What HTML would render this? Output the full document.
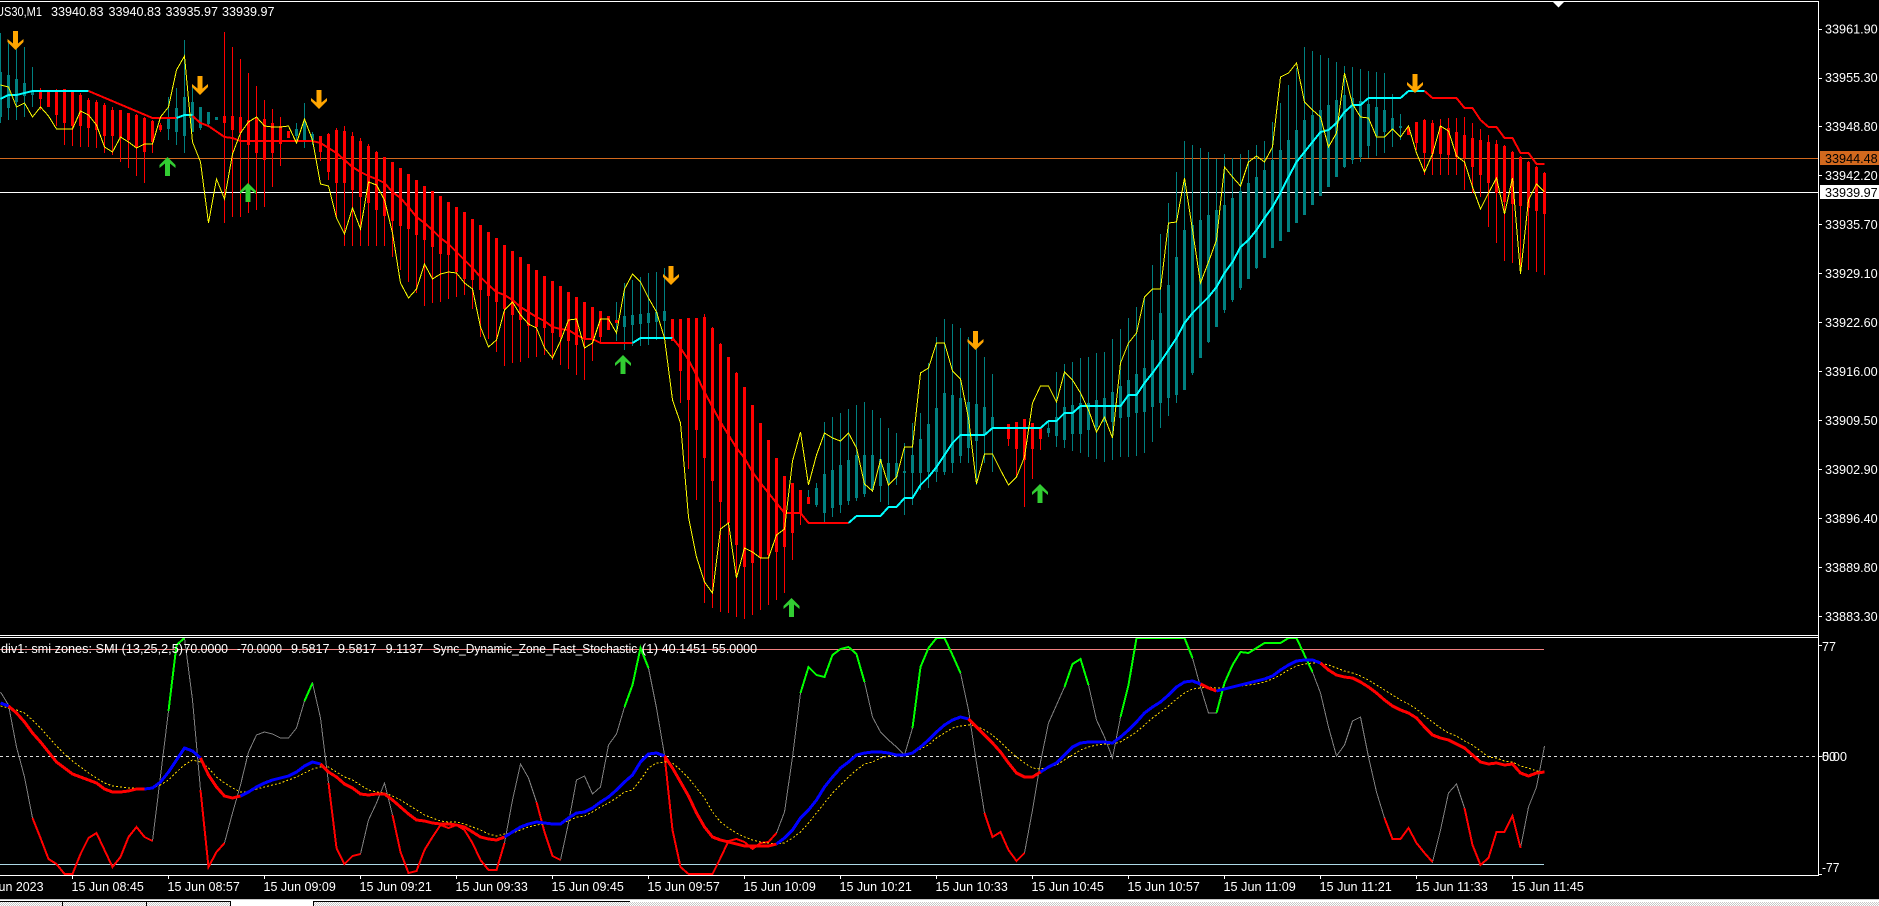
<!DOCTYPE html>
<html><head><meta charset="utf-8"><title>US30,M1</title>
<style>
html,body{margin:0;padding:0;background:#000;width:1879px;height:906px;overflow:hidden}
svg{display:block}
text{font-family:"Liberation Sans",sans-serif;font-size:12.5px;fill:#fff}
.c{shape-rendering:crispEdges;fill:none}
</style></head><body>
<svg width="1879" height="906" viewBox="0 0 1879 906" xmlns="http://www.w3.org/2000/svg">
<defs>
<clipPath id="m"><rect x="0" y="2" width="1818" height="633"/></clipPath>
<clipPath id="s"><rect x="0" y="638" width="1818" height="237"/></clipPath>
<pattern id="d" width="2" height="2" patternUnits="userSpaceOnUse"><rect width="2" height="2" fill="#fff"/><rect width="1" height="1" fill="#c8c8c8"/><rect x="1" y="1" width="1" height="1" fill="#c8c8c8"/></pattern>
<polygon id="up" points="0,0 8,8 8,11 2.5,6.5 2.5,19 -2.5,19 -2.5,6.5 -8,11 -8,8"/>
</defs>
<rect width="1879" height="906" fill="#000"/>

<g clip-path="url(#m)">
<path class="c" d="M0 158.5H1818" stroke="#d2691e"/>
<path class="c" d="M0 192.5H1818" stroke="#fff"/>
<g transform="translate(.5 0)">
<path class="c" stroke="#008080" stroke-width="1" d="M0 33V123M8 43V120M16 47V120M24 47V117M32 67V107M168 97V140M176 88V145M184 40V153M192 85V132M200 107V130M208 112V127M216 117V120M296 123V143M304 103V148M312 132V145M616 302V341M624 283V350M632 280V346M640 277V346M648 273V345M656 272V340M664 268V340M808 490V504M816 483V507M824 422V523M832 417V517M840 413V513M848 409V505M856 405V501M864 402V497M872 410V492M880 418V502M888 428V505M896 433V485M904 443V515M912 423V505M920 413V490M928 363V488M936 337V482M944 319V475M952 324V473M960 328V463M968 337V463M976 347V485M984 357V463M992 374V472M1048 422V437M1056 372V447M1064 364V448M1072 362V451M1080 358V453M1088 357V457M1096 353V459M1104 352V462M1112 339V460M1120 329V457M1128 318V457M1136 307V456M1144 297V453M1152 265V442M1160 234V428M1168 203V416M1176 172V403M1184 141V390M1192 145V375M1200 148V358M1208 152V343M1216 159V327M1224 154V313M1232 158V302M1240 154V290M1248 150V279M1256 145V269M1264 141V258M1272 122V248M1280 103V241M1288 85V232M1296 68V223M1304 47V215M1312 51V205M1320 55V196M1328 58V187M1336 62V177M1344 66V168M1352 67V164M1360 69V162M1368 71V158M1376 72V156M1384 73V153M1392 94V147M1400 114V140"/>
<path class="c" stroke="#008080" stroke-width="3" d="M0 72V117M8 75V108M16 79V102M24 83V96M32 91V95M168 117V129M176 108V132M184 97V136M192 102V132M200 107V128M208 112V124M216 117V120M296 129V136M304 121V140M312 134V140M624 316V327M632 315V325M640 314V324M648 313V323M656 312V322M664 311V321M816 488V505M824 474V513M832 470V508M840 465V505M848 460V501M856 455V498M864 455V494M872 455V490M880 459V486M888 463V483M896 463V477M904 471V473M912 455V473M920 439V473M928 424V472M936 408V472M944 393V472M952 395V463M960 398V456M968 402V448M976 404V441M984 407V435M992 417V428M1048 428V433M1056 417V436M1064 407V440M1072 405V434M1080 403V434M1088 403V430M1096 400V427M1104 398V422M1112 392V422M1120 386V418M1128 380V417M1136 374V413M1144 368V412M1152 340V407M1160 313V403M1168 285V398M1176 257V395M1184 230V390M1192 225V373M1200 220V358M1208 215V342M1216 210V327M1224 205V310M1232 198V300M1240 191V288M1248 183V279M1256 177V268M1264 170V258M1272 160V248M1280 150V241M1288 140V232M1296 130V223M1304 120V215M1312 115V205M1320 110V196M1328 105V187M1336 100V177M1344 95V167M1352 98V160M1360 101V157M1368 104V146M1376 107V136M1384 110V132M1392 118V130M1400 126V128"/>
<path class="c" stroke="#f00" stroke-width="1" d="M40 88V110M48 91V107M56 89V126M64 89V145M72 91V146M80 93V147M88 98V147M96 100V148M104 103V153M112 107V155M120 110V162M128 113V168M136 114V176M144 117V183M152 120V153M160 123V132M224 32V223M232 47V217M240 59V217M248 73V213M256 86V210M264 100V207M272 109V187M280 117V166M288 131V138M320 136V161M328 133V180M336 128V217M344 126V246M352 132V246M360 138V246M368 144V246M376 151V246M384 157V246M392 162V257M400 168V270M408 174V282M416 180V293M424 186V306M432 191V303M440 196V302M448 202V299M456 207V297M464 212V295M472 219V309M480 225V337M488 232V339M496 238V352M504 245V366M512 251V363M520 257V362M528 264V358M536 270V357M544 276V355M552 281V360M560 286V365M568 292V369M576 297V375M584 302V380M592 307V361M600 311V342M608 316V330M672 319V341M680 319V403M688 318V469M696 318V500M704 314V603M712 327V608M720 343V612M728 357V613M736 372V617M744 387V619M752 405V615M760 423V610M768 440V605M776 458V600M784 476V593M792 483V560M800 490V525M1008 424V446M1016 422V477M1024 419V507M1032 423V479M1040 427V450M1408 127V135M1416 122V150M1424 119V175M1432 120V175M1440 119V175M1448 118V175M1456 118V175M1464 117V190M1472 123V193M1480 129V197M1488 135V227M1496 140V243M1504 145V261M1512 151V263M1520 156V273M1528 161V270M1536 166V272M1544 172V275"/>
<path class="c" stroke="#f00" stroke-width="3" d="M40 92V99M48 91V107M56 91V115M64 89V123M72 92V126M80 95V126M88 100V128M96 102V130M104 105V136M112 110V136M120 110V138M128 113V140M136 115V147M144 118V152M152 121V142M160 125V130M224 116V123M232 116V130M240 117V133M248 120V145M256 118V153M264 119V160M272 123V153M280 126V144M288 131V138M320 136V152M328 134V172M336 130V183M344 131V183M352 136V190M360 141V197M368 146V203M376 152V210M384 157V216M392 162V221M400 168V226M408 174V229M416 180V235M424 186V240M432 191V247M440 196V254M448 202V255M456 207V272M464 212V279M472 219V280M480 225V290M488 232V296M496 238V302M504 245V309M512 251V315M520 257V320M528 264V326M536 270V327M544 276V328M552 281V333M560 286V337M568 292V341M576 297V345M584 302V338M592 307V338M600 311V337M608 316V330M616 320V323M672 319V341M680 319V371M688 318V400M696 318V430M704 317V458M712 328V481M720 344V502M728 357V523M736 373V545M744 387V567M752 405V563M760 423V558M768 440V555M776 458V552M784 476V547M792 483V533M800 490V514M808 497V504M1000 427V429M1008 424V439M1016 422V449M1024 419V460M1032 423V449M1040 427V439M1408 127V135M1416 122V143M1424 120V153M1432 123V154M1440 126V154M1448 128V155M1456 132V157M1464 135V158M1472 138V167M1480 140V175M1488 142V183M1496 144V193M1504 146V202M1512 152V204M1520 157V206M1528 162V208M1536 167V211M1544 173V214"/>
<!-- MA -->
<g stroke-width="2" class="c">
<polyline stroke="#0ff" points="0,99 8,95 16,95 24,93 32,91 88,91"/>
<polyline stroke="#f00" points="88,91 152,118 176,118"/>
<polyline stroke="#0ff" points="176,118 184,115 192,115"/>
<polyline stroke="#f00" points="192,116 200,123 208,126 224,137 232,138 240,141 312,141 320,143 328,148 336,153 344,160 352,167 360,172 368,176 376,179 384,183 392,192 400,198 408,207 416,217 424,223 432,230 440,238 448,244 456,252 464,260 472,268 480,277 488,285 496,292 504,295 512,300 520,307 528,312 536,317 544,321 552,327 560,329 568,330 576,335 584,339 592,339 600,343 632,343"/>
<polyline stroke="#0ff" points="632,343 640,338 672,338"/>
<polyline stroke="#f00" points="672,338 680,348 688,360 696,375 704,392 712,407 720,422 728,435 736,448 744,458 752,472 760,483 768,493 776,503 784,513 800,513 808,523 848,523"/>
<polyline stroke="#0ff" points="848,523 856,516 880,516 888,507 896,507 904,498 912,498 920,485 928,477 936,467 944,455 952,443 960,435 984,435 992,428 1040,428 1048,421 1056,421 1064,413 1072,413 1080,406 1120,406 1128,395 1136,395 1144,383 1152,373 1160,362 1168,350 1176,338 1184,323 1192,313 1200,305 1208,297 1216,287 1224,273 1232,262 1240,247 1248,240 1256,230 1264,218 1272,207 1280,193 1288,177 1296,162 1304,152 1312,142 1320,132 1328,130 1336,123 1344,112 1352,105 1360,105 1368,98 1400,98 1408,91 1424,91"/>
<polyline stroke="#f00" points="1424,91 1432,98 1456,98 1464,108 1472,108 1480,120 1488,127 1496,127 1504,138 1512,138 1520,153 1528,153 1536,164 1544,164"/>
</g>
<!-- yellow -->
<polyline class="c" stroke="#ff0" points="0,85 8,87 16,107 24,103 32,117 40,107 48,116 56,129 64,129 72,129 80,111 88,115 96,125 104,147 112,152 120,137 128,142 136,148 144,144 152,144 160,117 168,107 176,70 184,56 192,142 200,162 208,223 216,179 224,199 232,154 240,133 248,122 256,117 264,126 272,127 280,127 288,126 296,143 304,119 312,140 320,184 328,186 336,218 344,234 352,208 360,229 368,182 376,185 384,200 392,233 400,283 408,298 416,289 424,264 432,279 440,274 448,272 456,273 464,283 472,289 480,327 488,347 496,340 504,310 512,302 520,315 528,324 536,328 544,348 552,358 560,341 568,320 576,319 584,348 592,343 600,319 608,319 616,333 624,289 632,274 640,282 648,298 656,312 664,338 672,400 680,423 688,517 696,557 704,582 712,593 720,529 728,523 736,578 744,548 752,552 760,558 768,558 776,535 784,529 792,461 800,432 808,485 816,455 824,433 832,438 840,441 848,433 856,448 864,484 872,491 880,460 888,485 896,477 904,447 912,447 920,373 928,368 936,343 944,343 952,371 960,379 968,418 976,484 984,454 992,454 1000,470 1008,485 1016,477 1024,457 1032,403 1040,386 1048,386 1056,402 1064,372 1072,380 1080,393 1088,410 1096,432 1104,417 1112,438 1120,363 1128,343 1136,333 1144,297 1152,289 1160,289 1168,223 1176,222 1184,178 1192,230 1200,283 1208,262 1216,240 1224,167 1232,177 1240,186 1248,162 1256,156 1264,162 1272,147 1280,77 1288,73 1296,63 1304,102 1312,110 1320,117 1328,147 1336,133 1344,73 1352,104 1360,117 1368,118 1376,137 1384,137 1392,129 1400,137 1408,126 1416,153 1424,172 1432,154 1440,126 1448,131 1456,156 1464,162 1472,187 1480,209 1488,193 1496,178 1504,214 1512,178 1520,274 1528,200 1536,184 1544,192"/>
</g>
<!-- arrows -->
<g fill="#ffa500">
<use href="#up" transform="translate(15.5 50) scale(1 -1)"/>
<use href="#up" transform="translate(200 95) scale(1 -1)"/>
<use href="#up" transform="translate(319 109) scale(1 -1)"/>
<use href="#up" transform="translate(671 285) scale(1 -1)"/>
<use href="#up" transform="translate(975.5 350) scale(1 -1)"/>
<use href="#up" transform="translate(1415 93) scale(1 -1)"/>
</g>
<g fill="#32cd32">
<use href="#up" transform="translate(167.5 157)"/>
<use href="#up" transform="translate(248 183)"/>
<use href="#up" transform="translate(623 355)"/>
<use href="#up" transform="translate(791.5 598)"/>
<use href="#up" transform="translate(1040 484)"/>
</g>
</g>

<!-- subwindow -->
<g clip-path="url(#s)">
<path class="c" d="M0 649.5H1544" stroke="#f08080"/>
<path class="c" d="M0 864.5H1544" stroke="#add8e6"/>
<path class="c" d="M0 756.5H1818" stroke="#dcdcdc" stroke-dasharray="3 3"/>
<g transform="translate(.5 0)">
<polyline class="c" stroke="#808080" points="0,692 8,705 16,747 24,777 32,818 40,838 48,859 56,864 64,874 72,874 80,854 88,838 96,833 104,850 112,867 120,857 128,837 136,827 144,837 152,841 160,776 168,711 176,645 184,638 192,700 200,790 208,867 216,852 224,843 232,813 240,785 248,752 256,735 264,732 272,734 280,738 288,738 296,728 304,701 312,683 320,718 328,783 336,848 344,864 352,856 360,854 368,820 376,803 384,783 392,815 400,852 408,873 416,871 424,850 432,837 440,825 448,828 456,825 464,830 472,843 480,860 488,870 496,870 504,843 512,800 520,764 528,778 536,802 544,832 552,856 560,860 568,823 576,780 584,776 592,794 600,787 608,745 616,734 624,707 632,685 640,648 648,668 656,708 664,755 672,830 680,867 688,874 696,874 704,874 712,874 720,858 728,841 736,839 744,842 752,849 760,843 768,842 776,833 784,812 792,757 800,693 808,667 816,675 824,677 832,655 840,649 848,647 856,654 864,682 872,717 880,732 888,740 896,747 904,755 912,728 920,667 928,648 936,638 944,638 952,655 960,673 968,710 976,763 984,813 992,837 1000,832 1008,850 1016,861 1024,853 1032,810 1040,762 1048,723 1056,705 1064,687 1072,664 1080,659 1088,685 1096,720 1104,737 1112,758 1120,717 1128,685 1136,638 1184,638 1192,658 1200,687 1208,713 1216,713 1224,683 1232,665 1240,652 1248,653 1256,648 1264,643 1280,643 1288,638 1296,638 1304,655 1312,672 1320,693 1328,727 1336,756 1344,745 1352,721 1360,717 1368,757 1376,792 1384,818 1392,839 1400,839 1408,828 1416,843 1424,853 1432,862 1440,830 1448,793 1456,784 1464,808 1472,845 1480,865 1488,858 1496,832 1504,832 1512,816 1520,848 1528,807 1536,787 1544,746"/>
<g class="c" stroke="#f00" stroke-width="2">
<polyline points="32,818 40,838 48,859 56,864 64,874 72,874 80,854 88,838 96,833 104,850 112,867 120,857 128,837 136,827 144,837 152,841"/>
<polyline points="200,790 208,867 216,852 224,843"/>
<polyline points="328,783 336,848 344,864 352,856 360,854"/>
<polyline points="392,815 400,852 408,873 416,871 424,850 432,837 440,825 448,828 456,825 464,830 472,843 480,860 488,870 496,870 504,843"/>
<polyline points="536,802 544,832 552,856 560,860"/>
<polyline points="664,755 672,830 680,867 688,874 712,874 720,858 728,841 736,839 744,842 752,849 760,843 768,842 776,833"/>
<polyline points="984,813 992,837 1000,832 1008,850 1016,861 1024,853"/>
<polyline points="1384,818 1392,839 1400,839 1408,828 1416,843 1424,853 1432,862"/>
<polyline points="1464,808 1472,845 1480,865 1488,858 1496,832 1504,832 1512,816 1520,848"/>
</g>
<g class="c" stroke="#0f0" stroke-width="2">
<polyline points="168,711 176,645 184,638"/>
<polyline points="304,701 312,683"/>
<polyline points="624,707 632,685 640,648 648,668"/>
<polyline points="800,693 808,667 816,675 824,677 832,655 840,649 848,647 856,654 864,682"/>
<polyline points="912,728 920,667 928,648 936,638 944,638 952,655 960,673"/>
<polyline points="1064,687 1072,664 1080,659 1088,685"/>
<polyline points="1120,717 1128,685 1136,638 1184,638 1192,658"/>
<polyline points="1216,713 1224,683 1232,665 1240,652 1248,653 1256,648 1264,643 1280,643 1288,638 1296,638 1304,655 1312,672"/>
</g>
<polyline class="c" stroke="#ffd700" stroke-dasharray="2 2" points="0,706 16,710 24,713 32,720 40,728 48,737 56,746 64,754 72,761 80,767 88,773 96,778 104,783 112,786 120,787 128,788 136,788 144,788 152,788 160,785 168,780 176,772 184,765 192,760 200,762 208,768 216,777 224,783 232,788 240,792 248,792 256,789 264,787 272,785 280,783 288,780 296,777 304,773 312,769 320,767 328,767 336,772 344,777 352,780 360,785 368,790 376,792 384,793 392,796 400,800 408,805 416,810 424,815 432,818 440,821 448,822 456,822 464,824 472,827 480,830 488,834 496,836 504,834 512,833 520,830 528,827 536,825 544,824 552,824 560,823 568,821 576,817 584,816 592,812 600,807 608,803 616,798 624,792 632,790 640,780 648,768 656,763 664,762 672,763 680,770 688,778 696,788 704,798 712,812 720,822 728,828 736,833 744,837 752,840 760,842 768,843 776,844 784,843 792,838 800,832 808,823 816,813 824,803 832,793 840,785 848,777 856,770 864,764 872,762 880,758 888,756 896,755 904,755 912,753 920,749 928,745 936,738 944,733 952,728 960,726 968,725 976,726 984,730 992,735 1000,742 1008,750 1016,757 1024,763 1032,768 1040,769 1048,767 1056,765 1064,760 1072,755 1080,750 1088,747 1096,745 1104,744 1112,744 1120,742 1128,737 1136,732 1144,725 1152,718 1160,712 1168,706 1176,699 1184,693 1192,689 1200,688 1208,687 1216,688 1224,688 1232,687 1240,686 1248,685 1256,684 1264,682 1272,679 1280,675 1288,670 1296,666 1304,664 1312,663 1320,663 1328,665 1336,668 1344,671 1352,673 1360,676 1368,680 1376,685 1384,690 1392,695 1400,700 1408,704 1416,709 1424,716 1432,722 1440,728 1448,733 1456,736 1464,741 1472,745 1480,751 1488,757 1496,758 1504,761 1512,762 1520,766 1528,768 1536,771 1544,772"/>
<g class="c" stroke-width="3">
<polyline stroke="#00f" points="0,703 8,706"/>
<polyline stroke="#f00" points="8,706 16,713 24,722 32,733 40,742 48,752 56,762 64,768 72,774 80,777 88,780 96,783 104,789 112,792 120,792 128,791 136,789 144,789"/>
<polyline stroke="#00f" points="144,789 152,788 160,782 168,772 176,760 184,748 192,751 200,758"/>
<polyline stroke="#f00" points="200,758 208,775 216,787 224,796 232,798 240,796"/>
<polyline stroke="#00f" points="240,796 248,792 256,787 264,783 272,780 280,778 288,776 296,772 304,766 312,762 320,764"/>
<polyline stroke="#f00" points="320,764 328,772 336,777 344,784 352,788 360,794 368,795 376,794 384,794 392,800 400,807 408,814 416,820 424,821 432,823 440,824 448,824 456,825 464,827 472,832 480,837 488,839 496,840 504,837"/>
<polyline stroke="#00f" points="504,837 512,832 520,827 528,824 536,822 544,823 552,824 560,824 568,818 576,813 584,812 592,808 600,802 608,797 616,790 624,782 632,775 640,762 648,754 656,753 664,756"/>
<polyline stroke="#f00" points="664,756 672,768 680,782 688,796 696,813 704,827 712,837 720,840 728,842 736,844 744,846 768,846 776,844"/>
<polyline stroke="#00f" points="776,844 784,838 792,830 800,818 808,810 816,800 824,787 832,777 840,768 848,762 856,755 864,753 872,752 880,752 888,753 896,755 904,755 912,753 920,747 928,740 936,732 944,725 952,720 960,717 968,719"/>
<polyline stroke="#f00" points="968,719 976,727 984,735 992,743 1000,752 1008,763 1016,773 1024,777 1032,777 1040,772"/>
<polyline stroke="#00f" points="1040,772 1048,767 1056,763 1064,755 1072,747 1080,743 1088,742 1104,742 1112,743 1120,737 1128,730 1136,722 1144,713 1152,707 1160,702 1168,695 1176,687 1184,682 1192,681 1200,684"/>
<polyline stroke="#f00" points="1200,684 1208,688 1216,691"/>
<polyline stroke="#00f" points="1216,691 1224,689 1232,687 1240,685 1248,683 1256,681 1264,679 1272,676 1280,670 1288,665 1296,661 1304,660 1312,660 1320,663"/>
<polyline stroke="#f00" points="1320,663 1328,670 1336,675 1344,677 1352,678 1360,682 1368,687 1376,693 1384,700 1392,706 1400,710 1408,713 1416,718 1424,727 1432,735 1440,738 1448,740 1456,744 1464,748 1472,755 1480,762 1488,764 1496,763 1504,765 1512,764 1520,773 1528,776 1536,773 1544,772"/>
</g>
</g>
</g>

<!-- frame -->
<path class="c" stroke="#fff" d="M0 1.5H1818.5M0 635.5H1818.5M0 637.5H1818.5M0 875.5H1818.5M1818.5 1V876"/>
<polygon points="1553,2 1564,2 1558.5,7.5" fill="#fff"/>
<text x="-4" y="16" textLength="46" lengthAdjust="spacingAndGlyphs">US30,M1</text>
<text x="51" y="16" textLength="52.5" lengthAdjust="spacingAndGlyphs">33940.83</text>
<text x="108.5" y="16" textLength="52.5" lengthAdjust="spacingAndGlyphs">33940.83</text>
<text x="165.5" y="16" textLength="52.5" lengthAdjust="spacingAndGlyphs">33935.97</text>
<text x="222" y="16" textLength="52.5" lengthAdjust="spacingAndGlyphs">33939.97</text>

<!-- price axis -->
<path class="c" stroke="#fff" d="M1819 29.5h3M1819 78.5h3M1819 126.5h3M1819 175.5h3M1819 224.5h3M1819 273.5h3M1819 322.5h3M1819 371.5h3M1819 420.5h3M1819 469.5h3M1819 518.5h3M1819 567.5h3M1819 616.5h3M1819 645.5h3M1819 756.5h3M1819 874.5h3"/>
<g>
<text x="1825" y="33.5" textLength="52.7" lengthAdjust="spacingAndGlyphs">33961.90</text>
<text x="1825" y="82" textLength="52.7" lengthAdjust="spacingAndGlyphs">33955.30</text>
<text x="1825" y="131" textLength="52.7" lengthAdjust="spacingAndGlyphs">33948.80</text>
<text x="1825" y="180" textLength="52.7" lengthAdjust="spacingAndGlyphs">33942.20</text>
<text x="1825" y="229" textLength="52.7" lengthAdjust="spacingAndGlyphs">33935.70</text>
<text x="1825" y="278" textLength="52.7" lengthAdjust="spacingAndGlyphs">33929.10</text>
<text x="1825" y="327" textLength="52.7" lengthAdjust="spacingAndGlyphs">33922.60</text>
<text x="1825" y="376" textLength="52.7" lengthAdjust="spacingAndGlyphs">33916.00</text>
<text x="1825" y="425" textLength="52.7" lengthAdjust="spacingAndGlyphs">33909.50</text>
<text x="1825" y="474" textLength="52.7" lengthAdjust="spacingAndGlyphs">33902.90</text>
<text x="1825" y="523" textLength="52.7" lengthAdjust="spacingAndGlyphs">33896.40</text>
<text x="1825" y="572" textLength="52.7" lengthAdjust="spacingAndGlyphs">33889.80</text>
<text x="1825" y="621" textLength="52.7" lengthAdjust="spacingAndGlyphs">33883.30</text>
</g>
<rect x="1820" y="151" width="59" height="14" fill="#d2691e"/>
<text x="1825" y="163" textLength="52.7" lengthAdjust="spacingAndGlyphs" style="fill:#000">33944.48</text>
<rect x="1820" y="185" width="59" height="14" fill="#fff"/>
<text x="1825" y="197" textLength="52.7" lengthAdjust="spacingAndGlyphs" style="fill:#000">33939.97</text>

<!-- sub labels -->
<text x="1822" y="651" textLength="14" lengthAdjust="spacingAndGlyphs">77</text>
<text x="1822" y="761" textLength="14" lengthAdjust="spacingAndGlyphs">50</text>
<text x="1822" y="761" textLength="25" lengthAdjust="spacingAndGlyphs">0.00</text>
<text x="1822" y="872" textLength="17.5" lengthAdjust="spacingAndGlyphs">-77</text>

<text x="1" y="653" textLength="182" lengthAdjust="spacingAndGlyphs">div1: smi zones: SMI (13,25,2,5)</text>
<text x="183.6" y="653" textLength="44.4" lengthAdjust="spacingAndGlyphs">70.0000</text>
<text x="237" y="653" textLength="45" lengthAdjust="spacingAndGlyphs">-70.0000</text>
<text x="291" y="653" textLength="38.5" lengthAdjust="spacingAndGlyphs">9.5817</text>
<text x="338" y="653" textLength="38.5" lengthAdjust="spacingAndGlyphs">9.5817</text>
<text x="385.7" y="653" textLength="37.5" lengthAdjust="spacingAndGlyphs">9.1137</text>
<text x="432.7" y="653" textLength="204.5" lengthAdjust="spacingAndGlyphs">Sync_Dynamic_Zone_Fast_Stochastic</text>
<text x="641.7" y="653" textLength="16.5" lengthAdjust="spacingAndGlyphs">(1)</text>
<text x="661.7" y="653" textLength="45.5" lengthAdjust="spacingAndGlyphs">40.1451</text>
<text x="712" y="653" textLength="45" lengthAdjust="spacingAndGlyphs">55.0000</text>

<!-- time axis -->
<path class="c" stroke="#fff" d="M72.5 875v4M168.5 875v4M264.5 875v4M360.5 875v4M456.5 875v4M552.5 875v4M648.5 875v4M744.5 875v4M840.5 875v4M936.5 875v4M1032.5 875v4M1128.5 875v4M1224.5 875v4M1320.5 875v4M1416.5 875v4M1512.5 875v4"/>
<g>
<text x="-25" y="891" textLength="68.5" lengthAdjust="spacingAndGlyphs">15 Jun 2023</text>
<text x="71.5" y="891" textLength="72.3" lengthAdjust="spacingAndGlyphs">15 Jun 08:45</text>
<text x="167.5" y="891" textLength="72.3" lengthAdjust="spacingAndGlyphs">15 Jun 08:57</text>
<text x="263.5" y="891" textLength="72.3" lengthAdjust="spacingAndGlyphs">15 Jun 09:09</text>
<text x="359.5" y="891" textLength="72.3" lengthAdjust="spacingAndGlyphs">15 Jun 09:21</text>
<text x="455.5" y="891" textLength="72.3" lengthAdjust="spacingAndGlyphs">15 Jun 09:33</text>
<text x="551.5" y="891" textLength="72.3" lengthAdjust="spacingAndGlyphs">15 Jun 09:45</text>
<text x="647.5" y="891" textLength="72.3" lengthAdjust="spacingAndGlyphs">15 Jun 09:57</text>
<text x="743.5" y="891" textLength="72.3" lengthAdjust="spacingAndGlyphs">15 Jun 10:09</text>
<text x="839.5" y="891" textLength="72.3" lengthAdjust="spacingAndGlyphs">15 Jun 10:21</text>
<text x="935.5" y="891" textLength="72.3" lengthAdjust="spacingAndGlyphs">15 Jun 10:33</text>
<text x="1031.5" y="891" textLength="72.3" lengthAdjust="spacingAndGlyphs">15 Jun 10:45</text>
<text x="1127.5" y="891" textLength="72.3" lengthAdjust="spacingAndGlyphs">15 Jun 10:57</text>
<text x="1223.5" y="891" textLength="72.3" lengthAdjust="spacingAndGlyphs">15 Jun 11:09</text>
<text x="1319.5" y="891" textLength="72.3" lengthAdjust="spacingAndGlyphs">15 Jun 11:21</text>
<text x="1415.5" y="891" textLength="72.3" lengthAdjust="spacingAndGlyphs">15 Jun 11:33</text>
<text x="1511.5" y="891" textLength="72.3" lengthAdjust="spacingAndGlyphs">15 Jun 11:45</text>
</g>

<!-- bottom tabs -->
<rect x="0" y="899" width="1879" height="1" fill="#c8c8c8"/>
<rect x="0" y="900" width="1879" height="6" fill="#fff"/>
<rect x="0" y="902" width="231" height="4" fill="url(#d)"/>
<rect x="313" y="902" width="1566" height="4" fill="url(#d)"/>
<path class="c" stroke="#000" d="M0 901.5H231M62.5 902V906M146.5 902V906M230.5 901V906M313.5 901V906M313 901.5H630"/>
</svg>
</body></html>
